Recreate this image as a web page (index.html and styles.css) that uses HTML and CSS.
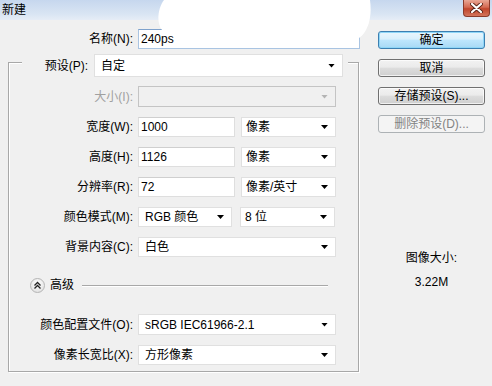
FILE: index.html
```html
<!DOCTYPE html>
<html>
<head>
<meta charset="utf-8">
<link rel="stylesheet" href="styles.css">
</head>
<body>
<div class="win">
  <div class="titlebar">
    <span class="title">新建</span>
    <div class="close">
      <svg width="13" height="10" viewBox="0 0 13 10"><path d="M2 1 L11 9 M11 1 L2 9" stroke="#5a2418" stroke-width="4" stroke-linecap="round"/><path d="M2 1 L11 9 M11 1 L2 9" stroke="#fff" stroke-width="2.2" stroke-linecap="round"/></svg>
    </div>
  </div>
  <div class="main">
    <div class="left">
      <div class="row name-row">
        <span class="lbl">名称(N):</span>
        <div class="input focus">240ps</div>
      </div>
      <div class="group">
        <div class="group-head">
          <span class="lbl head-lbl">预设(P):</span>
          <div class="combo preset">自定<i class="arrow"></i></div>
        </div>
        <div class="row r-size">
          <span class="lbl dis">大小(I):</span>
          <div class="combo disabled full"><span></span><i class="arrow"></i></div>
        </div>
        <div class="row r-std">
          <span class="lbl">宽度(W):</span>
          <div class="fields"><div class="input num">1000</div><div class="combo unit">像素<i class="arrow"></i></div></div>
        </div>
        <div class="row r-std">
          <span class="lbl">高度(H):</span>
          <div class="fields"><div class="input num">1126</div><div class="combo unit">像素<i class="arrow"></i></div></div>
        </div>
        <div class="row r-std">
          <span class="lbl">分辨率(R):</span>
          <div class="fields"><div class="input num">72</div><div class="combo unit">像素/英寸<i class="arrow"></i></div></div>
        </div>
        <div class="row r-std">
          <span class="lbl">颜色模式(M):</span>
          <div class="fields mode"><div class="combo half">RGB 颜色<i class="arrow"></i></div><div class="combo unit">8 位<i class="arrow"></i></div></div>
        </div>
        <div class="row r-std">
          <span class="lbl">背景内容(C):</span>
          <div class="combo full">白色<i class="arrow"></i></div>
        </div>
        <div class="adv">
          <span class="adv-btn">
            <svg width="9" height="9" viewBox="0 0 9 9"><path d="M1.5 4.5 L4.5 1.5 L7.5 4.5 M1.5 7.5 L4.5 4.5 L7.5 7.5" fill="none" stroke="#222" stroke-width="1.3"/></svg>
          </span>
          <span class="adv-txt">高级</span>
          <span class="adv-line"></span>
        </div>
        <div class="row r-profile">
          <span class="lbl">颜色配置文件(O):</span>
          <div class="combo full">sRGB IEC61966-2.1<i class="arrow"></i></div>
        </div>
        <div class="row r-std">
          <span class="lbl">像素长宽比(X):</span>
          <div class="combo full">方形像素<i class="arrow"></i></div>
        </div>
      </div>
    </div>
    <div class="right">
      <div class="btn default">确定</div>
      <div class="btn">取消</div>
      <div class="btn">存储预设(S)...</div>
      <div class="btn off">删除预设(D)...</div>
      <div class="size-lbl">图像大小:</div>
      <div class="size-val">3.22M</div>
    </div>
  </div>
  <div class="blob">
    <svg width="215" height="48" viewBox="0 0 215 48"><path d="M6 0 L212 0 C214 14 212 34 196 41 C178 47 120 46 80 44 C40 42 12 38 4 30 C-2 22 0 8 6 0 Z" fill="#ffffff"/></svg>
  </div>
</div>
</body>
</html>
```
FILE: styles.css
```css
html, body {
  margin: 0;
  padding: 0;
}
body {
  width: 492px;
  height: 386px;
  overflow: hidden;
  background: #f0f0f0;
}
.win {
  position: relative;
  width: 492px;
  height: 386px;
  background: #f0f0f0;
  font-family: "Liberation Sans", "Noto Sans CJK SC", sans-serif;
  font-size: 12px;
  line-height: 14px;
  color: #000;
}
.titlebar {
  height: 20px;
  display: flex;
  justify-content: space-between;
  align-items: flex-start;
  background: linear-gradient(#c6d7ee, #d9e5f3 70%, #e6edf6);
}
.title {
  margin: 3px 0 0 2px;
  font-size: 12px;
}
.close {
  width: 27px;
  height: 17px;
  margin-right: 2px;
  box-sizing: border-box;
  border: 1px solid #8a3b2c;
  border-top: none;
  border-radius: 0 0 4px 4px;
  background: linear-gradient(#e9a795, #d46a52 45%, #c0452c 55%, #d3745c);
  display: flex;
  align-items: center;
  justify-content: center;
}
.main {
  display: flex;
  padding-top: 9px;
}
.left {
  width: 378px;
}
.row {
  display: grid;
  grid-template-columns: 124px auto;
  column-gap: 5px;
  align-items: center;
}
.name-row {
  grid-template-columns: 133px 222px;
  height: 20px;
}
.lbl {
  text-align: right;
  white-space: nowrap;
}
.dis {
  color: #a0a0a0;
}
.input {
  box-sizing: border-box;
  height: 20px;
  background: #fff;
  border: 1px solid #dedede;
  border-top-color: #cfcfcf;
  padding: 0 2px;
  display: flex;
  align-items: center;
}
.input.focus {
  border-color: #a9c4e2;
  border-top-color: #7fa2cc;
}
.input.num {
  width: 97px;
}
.combo {
  box-sizing: border-box;
  height: 20px;
  background: #fff;
  border: 1px solid #e0e0e0;
  padding: 0 7px 0 6px;
  display: flex;
  align-items: center;
  justify-content: space-between;
  white-space: nowrap;
}
.arrow {
  display: block;
  width: 7px;
  height: 4px;
  background: #000;
  clip-path: polygon(0 0, 100% 0, 50% 100%);
}
.combo.full {
  width: 198px;
}
.combo.unit {
  width: 95px;
  padding-left: 4px;
}
.combo.half {
  width: 94px;
}
.combo.disabled {
  height: 21px;
  background: #f0f0f0;
  border-color: #c4c4c4;
}
.combo.disabled .arrow {
  background: #b4b4b4;
}
.fields {
  display: flex;
  gap: 6px;
}
.fields.mode {
  gap: 8px;
}
.group {
  box-sizing: border-box;
  width: 351px;
  height: 310px;
  margin: 13px 0 0 8px;
  border: 1px solid #a8a8a8;
  box-shadow: inset 1px 1px 0 #fff, 1px 1px 0 #fff;
}
.group-head {
  margin: -9px 0 0 13px;
  width: 326px;
  height: 23px;
  display: flex;
  align-items: center;
  background: #f0f0f0;
}
.head-lbl {
  width: 66px;
}
.combo.preset {
  width: 249px;
  height: 23px;
  margin-left: 6px;
}
.r-size {
  margin-top: 9px;
  height: 21px;
}
.r-size .combo {
  margin: 0;
}
.r-std {
  margin-top: 10px;
  height: 20px;
}
.r-profile {
  margin-top: 21px;
  height: 21px;
}
.r-profile .combo {
  height: 21px;
}
.adv {
  margin: 20px 30px 0 21px;
  height: 16px;
  display: flex;
  align-items: center;
}
.adv-btn {
  box-sizing: border-box;
  width: 15px;
  height: 15px;
  border-radius: 50%;
  border: 1px solid #b5b5b5;
  background: radial-gradient(circle at 50% 35%, #ffffff, #e6e6e6 70%, #d4d4d4);
  display: flex;
  align-items: center;
  justify-content: center;
}
.adv-txt {
  margin-left: 5px;
}
.adv-line {
  flex: 1;
  height: 1px;
  margin-left: 8px;
  background: #a8a8a8;
  box-shadow: 0 1px 0 #fff;
}
.right {
  width: 107px;
  margin-top: 2px;
  display: flex;
  flex-direction: column;
  align-items: center;
}
.btn {
  box-sizing: border-box;
  width: 107px;
  height: 18px;
  margin-bottom: 10px;
  border: 1px solid #707070;
  border-radius: 3px;
  background: linear-gradient(#f2f2f2, #ebebeb 45%, #dddddd 50%, #cfcfcf);
  box-shadow: inset 0 0 0 1px rgba(255,255,255,0.7);
  display: flex;
  align-items: center;
  justify-content: center;
  white-space: nowrap;
}
.btn.default {
  border-color: #3c7fb1;
  background: linear-gradient(#eaf6fd, #d9f0fc 45%, #bee6fd 50%, #a7d9f5);
  box-shadow: inset 0 0 0 1px #8fd6f7;
}
.btn.off {
  border-color: #adb2b5;
  background: #f4f4f4;
  box-shadow: none;
  color: #838383;
}
.size-lbl {
  margin-top: 108px;
}
.size-val {
  margin-top: 10px;
}
.blob {
  position: absolute;
  left: 158px;
  top: 0;
  width: 215px;
  height: 48px;
}
.blob svg {
  display: block;
}
```
